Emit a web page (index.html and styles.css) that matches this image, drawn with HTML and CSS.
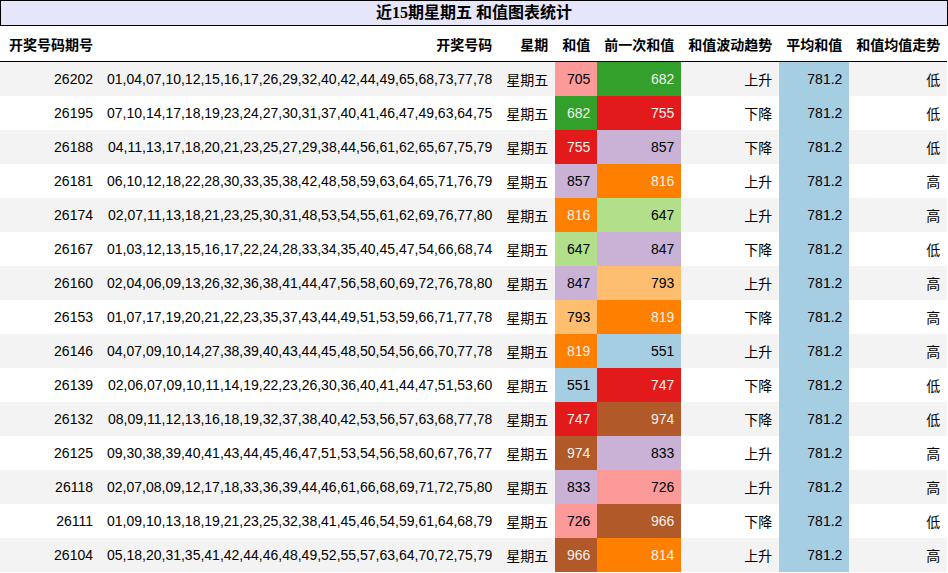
FILE: index.html
```html
<!DOCTYPE html>
<html lang="zh">
<head>
<meta charset="utf-8">
<title>近15期星期五 和值图表统计</title>
<link rel="stylesheet" href="styles.css">
</head>
<body>
<div class="wrap">
  <div class="title">近15期星期五 和值图表统计</div>
  <table class="stats">
    <thead>
      <tr>
        <th class="left first">开奖号码期号</th>
        <th>开奖号码</th>
        <th>星期</th>
        <th>和值</th>
        <th>前一次和值</th>
        <th>和值波动趋势</th>
        <th>平均和值</th>
        <th>和值均值走势</th>
      </tr>
    </thead>
    <tbody>
      <tr><td class="first">26202</td><td>01,04,07,10,12,15,16,17,26,29,32,40,42,44,49,65,68,73,77,78</td><td>星期五</td><td class="c-pink">705</td><td class="c-green">682</td><td>上升</td><td class="avg">781.2</td><td>低</td></tr>
      <tr><td class="first">26195</td><td>07,10,14,17,18,19,23,24,27,30,31,37,40,41,46,47,49,63,64,75</td><td>星期五</td><td class="c-green">682</td><td class="c-red">755</td><td>下降</td><td class="avg">781.2</td><td>低</td></tr>
      <tr><td class="first">26188</td><td>04,11,13,17,18,20,21,23,25,27,29,38,44,56,61,62,65,67,75,79</td><td>星期五</td><td class="c-red">755</td><td class="c-lav">857</td><td>下降</td><td class="avg">781.2</td><td>低</td></tr>
      <tr><td class="first">26181</td><td>06,10,12,18,22,28,30,33,35,38,42,48,58,59,63,64,65,71,76,79</td><td>星期五</td><td class="c-lav">857</td><td class="c-orange">816</td><td>上升</td><td class="avg">781.2</td><td>高</td></tr>
      <tr><td class="first">26174</td><td>02,07,11,13,18,21,23,25,30,31,48,53,54,55,61,62,69,76,77,80</td><td>星期五</td><td class="c-orange">816</td><td class="c-lgreen">647</td><td>上升</td><td class="avg">781.2</td><td>高</td></tr>
      <tr><td class="first">26167</td><td>01,03,12,13,15,16,17,22,24,28,33,34,35,40,45,47,54,66,68,74</td><td>星期五</td><td class="c-lgreen">647</td><td class="c-lav">847</td><td>下降</td><td class="avg">781.2</td><td>低</td></tr>
      <tr><td class="first">26160</td><td>02,04,06,09,13,26,32,36,38,41,44,47,56,58,60,69,72,76,78,80</td><td>星期五</td><td class="c-lav">847</td><td class="c-lorange">793</td><td>上升</td><td class="avg">781.2</td><td>高</td></tr>
      <tr><td class="first">26153</td><td>01,07,17,19,20,21,22,23,35,37,43,44,49,51,53,59,66,71,77,78</td><td>星期五</td><td class="c-lorange">793</td><td class="c-orange">819</td><td>下降</td><td class="avg">781.2</td><td>高</td></tr>
      <tr><td class="first">26146</td><td>04,07,09,10,14,27,38,39,40,43,44,45,48,50,54,56,66,70,77,78</td><td>星期五</td><td class="c-orange">819</td><td class="c-lblue">551</td><td>上升</td><td class="avg">781.2</td><td>高</td></tr>
      <tr><td class="first">26139</td><td>02,06,07,09,10,11,14,19,22,23,26,30,36,40,41,44,47,51,53,60</td><td>星期五</td><td class="c-lblue">551</td><td class="c-red">747</td><td>下降</td><td class="avg">781.2</td><td>低</td></tr>
      <tr><td class="first">26132</td><td>08,09,11,12,13,16,18,19,32,37,38,40,42,53,56,57,63,68,77,78</td><td>星期五</td><td class="c-red">747</td><td class="c-brown">974</td><td>下降</td><td class="avg">781.2</td><td>低</td></tr>
      <tr><td class="first">26125</td><td>09,30,38,39,40,41,43,44,45,46,47,51,53,54,56,58,60,67,76,77</td><td>星期五</td><td class="c-brown">974</td><td class="c-lav">833</td><td>上升</td><td class="avg">781.2</td><td>高</td></tr>
      <tr><td class="first">26118</td><td>02,07,08,09,12,17,18,33,36,39,44,46,61,66,68,69,71,72,75,80</td><td>星期五</td><td class="c-lav">833</td><td class="c-pink">726</td><td>上升</td><td class="avg">781.2</td><td>高</td></tr>
      <tr><td class="first">26111</td><td>01,09,10,13,18,19,21,23,25,32,38,41,45,46,54,59,61,64,68,79</td><td>星期五</td><td class="c-pink">726</td><td class="c-brown">966</td><td>下降</td><td class="avg">781.2</td><td>低</td></tr>
      <tr><td class="first">26104</td><td>05,18,20,31,35,41,42,44,46,48,49,52,55,57,63,64,70,72,75,79</td><td>星期五</td><td class="c-brown">966</td><td class="c-orange">814</td><td>上升</td><td class="avg">781.2</td><td>高</td></tr>
    </tbody>
  </table>
</div>
</body>
</html>
```

FILE: styles.css
```css
html, body {
  margin: 0;
  padding: 0;
  background: #ffffff;
}

body {
  font-family: "Liberation Sans", "Noto Sans CJK SC", sans-serif;
  font-size: 14px;
  color: #000000;
}

.wrap {
  width: 948px;
}

.title {
  box-sizing: border-box;
  width: 948px;
  height: 26px;
  border: 1px solid #000000;
  background: #e6e6fa;
  font-family: "Liberation Serif", "Noto Sans CJK SC", serif;
  font-size: 16px;
  font-weight: bold;
  text-align: center;
  line-height: 24px;
}

.stats {
  border-collapse: collapse;
  border-spacing: 0;
}

.stats th,
.stats td {
  padding: 0 7px;
  text-align: right;
  white-space: nowrap;
  vertical-align: middle;
}

.stats th.first,
.stats td.first {
  padding-left: 9px;
}

.stats th {
  height: 35px;
  font-weight: bold;
  border-bottom: 1px solid #000000;
}

.stats th.left {
  text-align: left;
}

.stats td {
  height: 34px;
}

.stats tbody tr:nth-child(odd) {
  background: #f3f3f3;
}

.stats tbody tr:nth-child(even) {
  background: #ffffff;
}

.stats td.avg { background: #a6cee3; color: #000000; }

.c-pink { background: #fb9a99; color: #000000; }
.c-green { background: #33a02c; color: #f1f1f1; }
.c-red { background: #e31a1c; color: #f1f1f1; }
.c-lav { background: #cab2d6; color: #000000; }
.c-orange { background: #ff7f00; color: #f1f1f1; }
.c-lgreen { background: #b2df8a; color: #000000; }
.c-lorange { background: #fdbf6f; color: #000000; }
.c-lblue { background: #a6cee3; color: #000000; }
.c-brown { background: #b15928; color: #f1f1f1; }
```
